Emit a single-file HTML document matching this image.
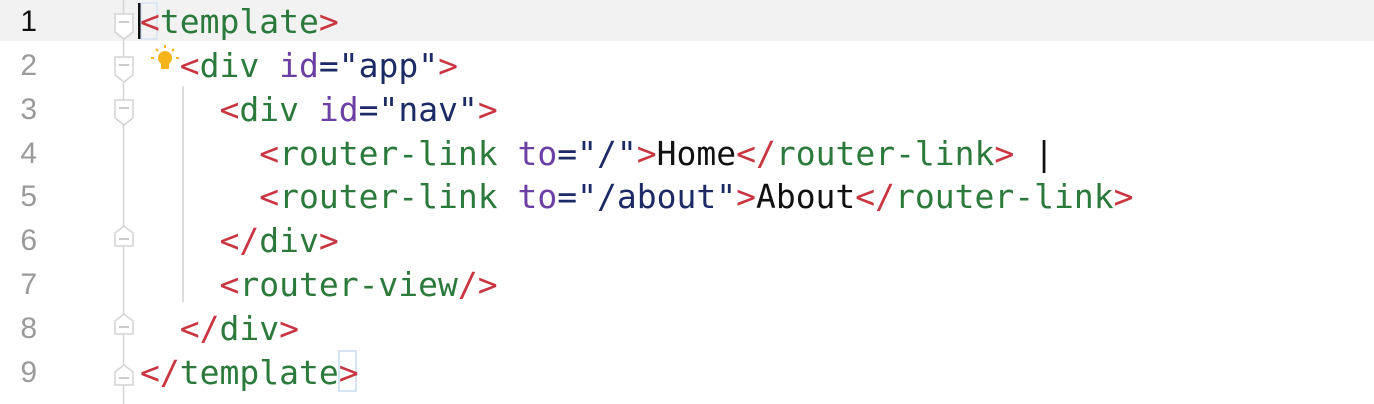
<!DOCTYPE html>
<html><head><style>
body{margin:0;width:1374px;height:404px;background:#fff;overflow:hidden;position:relative;font-family:"DejaVu Sans Mono","Liberation Mono",monospace;}
.hl{position:absolute;left:0;top:0;width:1374px;height:41px;background:#f2f2f2}
.ln{position:absolute;left:0;width:37px;text-align:right;font-size:30px;color:#9a9a9a;font-family:"Liberation Sans",sans-serif;line-height:44px}
.code{position:absolute;left:140px;font-size:33px;line-height:44px;white-space:pre;color:#111}
.t{color:#c93540}.n{color:#2b7a3b}.a{color:#6b3fa3}.s{color:#1c2b66}
</style></head><body>
<div class="hl"></div>
<div class="ln" style="top:0;color:#111">1</div>
<div class="ln" style="top:44px">2</div>
<div class="ln" style="top:88px">3</div>
<div class="ln" style="top:132px">4</div>
<div class="ln" style="top:175px">5</div>
<div class="ln" style="top:219px">6</div>
<div class="ln" style="top:263px">7</div>
<div class="ln" style="top:307px">8</div>
<div class="ln" style="top:351px">9</div>
<svg style="position:absolute;left:0;top:0" width="200" height="404">
<g fill="#fff" stroke="#d4d4d4" stroke-width="1.5">
<line x1="123.5" y1="0" x2="123.5" y2="404"/>
<path d="M115 14h18v18l-9 7l-9-7z"/>
<path d="M115 57h18v18l-9 7l-9-7z"/>
<path d="M115 100h18v18l-9 7l-9-7z"/>
<path d="M115 246v-13l9-7l9 7v13z"/>
<path d="M115 334v-13l9-7l9 7v13z"/>
<path d="M115 385v-13l9-7l9 7v13z"/>
</g>
<g stroke="#bbb" stroke-width="1.5">
<line x1="119" y1="22" x2="129" y2="22"/><line x1="119" y1="65" x2="129" y2="65"/><line x1="119" y1="108" x2="129" y2="108"/>
<line x1="119" y1="239" x2="129" y2="239"/><line x1="119" y1="327" x2="129" y2="327"/><line x1="119" y1="378" x2="129" y2="378"/>
</g>
<line x1="183" y1="86" x2="183" y2="302" stroke="#dcdcdc" stroke-width="2"/>
<line x1="223" y1="130" x2="223" y2="216" stroke="#dcdcdc" stroke-width="2"/>
<rect x="138" y="3" width="3" height="36" fill="#111"/>
<rect x="141" y="3" width="16" height="36" fill="none" stroke="#c9daf0" stroke-width="1"/>
<circle cx="165" cy="58" r="7" fill="#f5b51a"/><rect x="161" y="63" width="8" height="6" fill="#f5b51a"/>
<g stroke="#f5b51a" stroke-width="2"><line x1="151" y1="58" x2="154" y2="58"/><line x1="176" y1="58" x2="179" y2="58"/><line x1="165" y1="45" x2="165" y2="48"/><line x1="156" y1="49" x2="158" y2="51"/><line x1="174" y1="49" x2="172" y2="51"/></g>
</svg>
<svg style="position:absolute;left:338px;top:350px" width="22" height="44"><rect x="1" y="1" width="17" height="40" fill="none" stroke="#c9daf0" stroke-width="1.5"/></svg>
<div class="code" style="top:0"><span class="t">&lt;</span><span class="n">template</span><span class="t">&gt;</span></div>
<div class="code" style="top:44px">  <span class="t">&lt;</span><span class="n">div</span> <span class="a">id</span><span class="s">="app"</span><span class="t">&gt;</span></div>
<div class="code" style="top:88px">    <span class="t">&lt;</span><span class="n">div</span> <span class="a">id</span><span class="s">="nav"</span><span class="t">&gt;</span></div>
<div class="code" style="top:132px">      <span class="t">&lt;</span><span class="n">router-link</span> <span class="a">to</span><span class="s">="/"</span><span class="t">&gt;</span>Home<span class="t">&lt;/</span><span class="n">router-link</span><span class="t">&gt;</span> |</div>
<div class="code" style="top:175px">      <span class="t">&lt;</span><span class="n">router-link</span> <span class="a">to</span><span class="s">="/about"</span><span class="t">&gt;</span>About<span class="t">&lt;/</span><span class="n">router-link</span><span class="t">&gt;</span></div>
<div class="code" style="top:219px">    <span class="t">&lt;/</span><span class="n">div</span><span class="t">&gt;</span></div>
<div class="code" style="top:263px">    <span class="t">&lt;</span><span class="n">router-view</span><span class="t">/&gt;</span></div>
<div class="code" style="top:307px">  <span class="t">&lt;/</span><span class="n">div</span><span class="t">&gt;</span></div>
<div class="code" style="top:351px"><span class="t">&lt;/</span><span class="n">template</span><span class="t">&gt;</span></div>
</body></html>
